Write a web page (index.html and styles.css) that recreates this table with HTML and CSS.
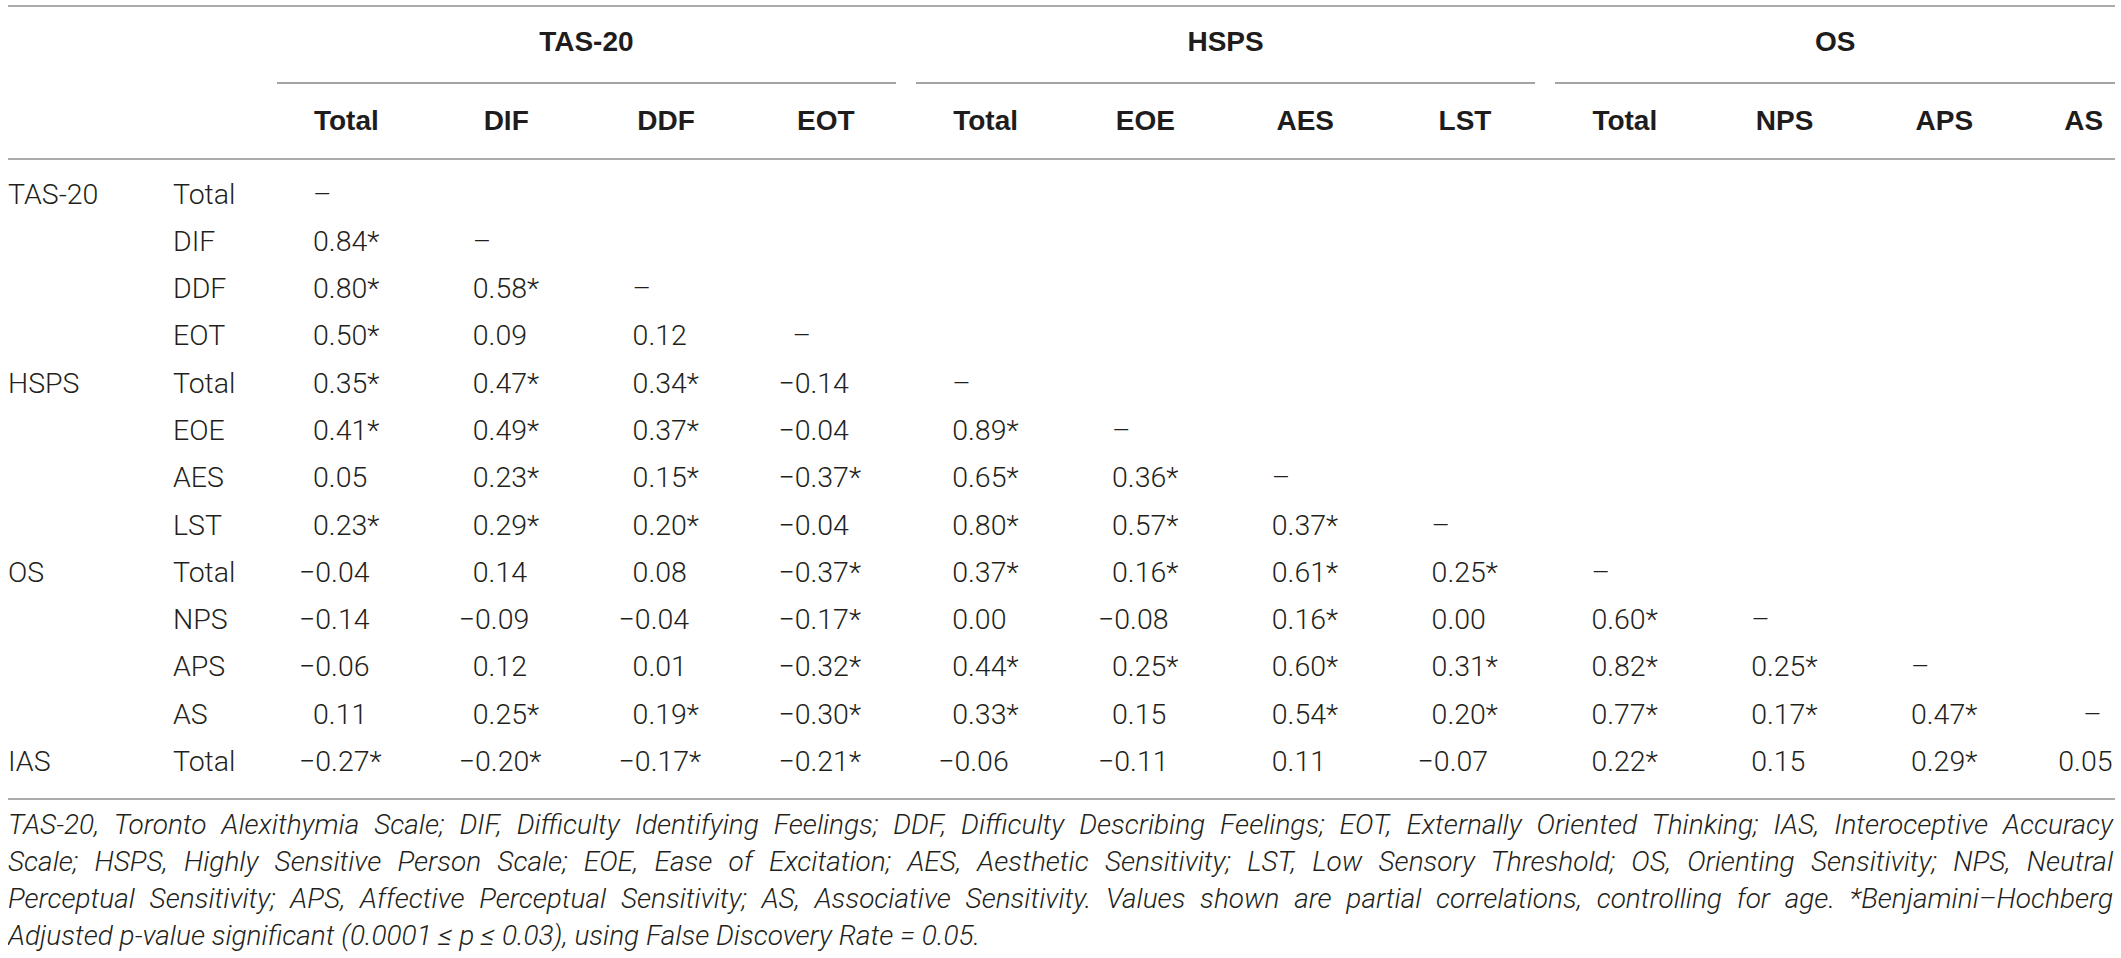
FILE: index.html
```html
<!DOCTYPE html>
<html lang="en">
<head>
  <meta charset="UTF-8" />
  <meta name="viewport" content="width=device-width, initial-scale=1.0" />
  <title>Partial correlations – TAS-20, HSPS, OS, IAS</title>
  <link rel="stylesheet" href="styles.css">
</head>
<body>
  <table class="corr">
    <colgroup>
      <col class="c-scale" />
      <col class="c-sub" />
      <col class="c-val" /><col class="c-val" /><col class="c-val" /><col class="c-val" />
      <col class="c-val" /><col class="c-val" /><col class="c-val" /><col class="c-val" />
      <col class="c-val" /><col class="c-val" /><col class="c-val" />
      <col class="c-last" />
    </colgroup>
    <thead>
      <tr class="groups">
        <th></th>
        <th></th>
        <th colspan="4" class="group"><div>TAS-20</div></th>
        <th colspan="4" class="group"><div>HSPS</div></th>
        <th colspan="4" class="group group-end"><div>OS</div></th>
      </tr>
      <tr class="cols">
        <th></th>
        <th></th>
        <th>Total</th><th>DIF</th><th>DDF</th><th>EOT</th>
        <th>Total</th><th>EOE</th><th>AES</th><th>LST</th>
        <th>Total</th><th>NPS</th><th>APS</th><th class="last">AS</th>
      </tr>
    </thead>
    <tbody>
      <tr class="first">
        <td>TAS-20</td><td>Total</td>
        <td>–</td><td></td><td></td><td></td><td></td><td></td><td></td><td></td><td></td><td></td><td></td><td></td>
      </tr>
      <tr>
        <td></td><td>DIF</td>
        <td>0.84*</td><td>–</td><td></td><td></td><td></td><td></td><td></td><td></td><td></td><td></td><td></td><td></td>
      </tr>
      <tr>
        <td></td><td>DDF</td>
        <td>0.80*</td><td>0.58*</td><td>–</td><td></td><td></td><td></td><td></td><td></td><td></td><td></td><td></td><td></td>
      </tr>
      <tr>
        <td></td><td>EOT</td>
        <td>0.50*</td><td>0.09</td><td>0.12</td><td>–</td><td></td><td></td><td></td><td></td><td></td><td></td><td></td><td></td>
      </tr>
      <tr>
        <td>HSPS</td><td>Total</td>
        <td>0.35*</td><td>0.47*</td><td>0.34*</td><td class="neg">−0.14</td><td>–</td><td></td><td></td><td></td><td></td><td></td><td></td><td></td>
      </tr>
      <tr>
        <td></td><td>EOE</td>
        <td>0.41*</td><td>0.49*</td><td>0.37*</td><td class="neg">−0.04</td><td>0.89*</td><td>–</td><td></td><td></td><td></td><td></td><td></td><td></td>
      </tr>
      <tr>
        <td></td><td>AES</td>
        <td>0.05</td><td>0.23*</td><td>0.15*</td><td class="neg">−0.37*</td><td>0.65*</td><td>0.36*</td><td>–</td><td></td><td></td><td></td><td></td><td></td>
      </tr>
      <tr>
        <td></td><td>LST</td>
        <td>0.23*</td><td>0.29*</td><td>0.20*</td><td class="neg">−0.04</td><td>0.80*</td><td>0.57*</td><td>0.37*</td><td>–</td><td></td><td></td><td></td><td></td>
      </tr>
      <tr>
        <td>OS</td><td>Total</td>
        <td class="neg">−0.04</td><td>0.14</td><td>0.08</td><td class="neg">−0.37*</td><td>0.37*</td><td>0.16*</td><td>0.61*</td><td>0.25*</td><td>–</td><td></td><td></td><td></td>
      </tr>
      <tr>
        <td></td><td>NPS</td>
        <td class="neg">−0.14</td><td class="neg">−0.09</td><td class="neg">−0.04</td><td class="neg">−0.17*</td><td>0.00</td><td class="neg">−0.08</td><td>0.16*</td><td>0.00</td><td>0.60*</td><td>–</td><td></td><td></td>
      </tr>
      <tr>
        <td></td><td>APS</td>
        <td class="neg">−0.06</td><td>0.12</td><td>0.01</td><td class="neg">−0.32*</td><td>0.44*</td><td>0.25*</td><td>0.60*</td><td>0.31*</td><td>0.82*</td><td>0.25*</td><td>–</td><td></td>
      </tr>
      <tr>
        <td></td><td>AS</td>
        <td>0.11</td><td>0.25*</td><td>0.19*</td><td class="neg">−0.30*</td><td>0.33*</td><td>0.15</td><td>0.54*</td><td>0.20*</td><td>0.77*</td><td>0.17*</td><td>0.47*</td><td class="dash-last">–</td>
      </tr>
      <tr class="final">
        <td>IAS</td><td>Total</td>
        <td class="neg">−0.27*</td><td class="neg">−0.20*</td><td class="neg">−0.17*</td><td class="neg">−0.21*</td><td class="neg">−0.06</td><td class="neg">−0.11</td><td>0.11</td><td class="neg">−0.07</td><td>0.22*</td><td>0.15</td><td>0.29*</td><td>0.05</td>
      </tr>
    </tbody>
  </table>

  <div class="footnote">
    <span class="line">TAS-20, Toronto Alexithymia Scale; DIF, Difficulty Identifying Feelings; DDF, Difficulty Describing Feelings; EOT, Externally Oriented Thinking; IAS, Interoceptive Accuracy</span>
    <span class="line">Scale; HSPS, Highly Sensitive Person Scale; EOE, Ease of Excitation; AES, Aesthetic Sensitivity; LST, Low Sensory Threshold; OS, Orienting Sensitivity; NPS, Neutral</span>
    <span class="line">Perceptual Sensitivity; APS, Affective Perceptual Sensitivity; AS, Associative Sensitivity. Values shown are partial correlations, controlling for age. *Benjamini–Hochberg</span>
    <span class="line end">Adjusted p-value significant (0.0001 ≤ p ≤ 0.03), using False Discovery Rate = 0.05.</span>
  </div>
</body>
</html>
```

FILE: styles.css
```css
* {
  box-sizing: border-box;
  margin: 0;
  padding: 0;
}
body {
  background-color: #fff;
  color: #231f20;
  font-family: Roboto, "Liberation Sans", Arial, sans-serif;
  font-weight: 300;
  font-size: 28.5px;
  margin: 5px 6px 0 8px;
}
.corr {
  width: 2107px;
  table-layout: fixed;
  border-collapse: collapse;
  border-top: 2px solid #ababab;
  border-bottom: 2px solid #ababab;
}
.c-scale {
  width: 165px;
}
.c-sub {
  width: 93.5px;
}
.c-val {
  width: 159.8px;
}
.c-last {
  width: 90.7px;
}
thead th {
  font-family: "Liberation Sans", Arial, sans-serif;
  font-weight: bold;
  font-size: 28px;
  text-align: center;
  color: #1e1c1d;
}
.groups th {
  height: 77px;
  vertical-align: top;
}
.group {
  padding: 0 10px 0 10.5px;
}
.group-end {
  padding-right: 0;
}
.group div {
  line-height: 70px;
  padding-bottom: 5px;
  border-bottom: 2px solid #a3a3a3;
}
.cols th {
  height: 74px;
  line-height: 74px;
  border-bottom: 2px solid #ababab;
}
.cols th.last {
  padding-left: 28px;
}
tbody td {
  line-height: 47.3px;
  white-space: nowrap;
  padding-left: 46.5px;
}
tbody td:nth-child(1),
tbody td:nth-child(2) {
  padding-left: 0;
}
tbody td:last-child {
  padding-left: 34px;
}
tbody td.dash-last {
  padding-left: 59px;
}
tbody td.neg {
  text-indent: -14px;
}
tbody tr.first td {
  padding-top: 10.5px;
}
tbody tr.final td {
  padding-bottom: 12.5px;
}
.footnote {
  width: 2105px;
  margin-top: 6.5px;
  font-style: italic;
  font-size: 28px;
  line-height: 37px;
}
.footnote .line {
  display: block;
  text-align: justify;
  text-align-last: justify;
}
.footnote .line.end {
  text-align-last: left;
}
```
